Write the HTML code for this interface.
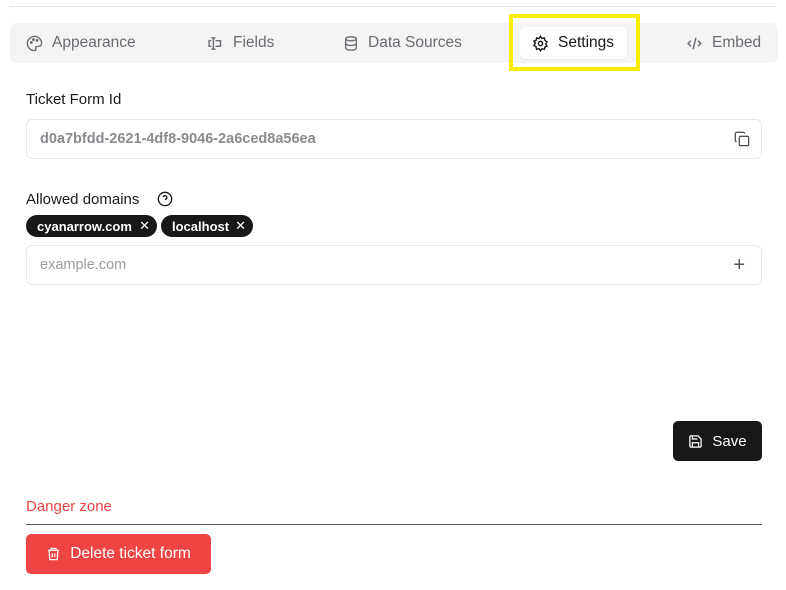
<!DOCTYPE html>
<html><head><style>
*{box-sizing:border-box;margin:0;padding:0}
body{width:786px;height:590px;background:#fff;font-family:"Liberation Sans",sans-serif;position:relative;overflow:hidden;color:#1a1a1a}
.a{position:absolute}
.tab{position:absolute;top:23px;height:40px;display:flex;align-items:center;font-size:15.5px;color:#6b6b72;gap:9px}
svg{display:block}
.input{position:absolute;left:26px;width:736px;height:40px;border:1px solid #e8e8ea;border-radius:6px;display:flex;align-items:center;padding-left:13px;font-size:14.5px}
.chip{position:absolute;top:215px;height:22px;background:#18181b;color:#fff;border-radius:11px;font-size:13px;font-weight:bold;display:flex;align-items:center;padding-left:11px}
</style></head><body>
<div class="a" style="left:10px;top:6px;width:766px;height:1px;background:#e5e5e5"></div>
<div class="a" style="left:10px;top:23px;width:768px;height:40px;background:#f4f4f5;border-radius:7px"></div>
<div class="tab" style="left:26px"><svg width="17" height="17" viewBox="0 0 24 24" fill="none" stroke="#6b6b72" stroke-width="2"><path d="M12 2a10 10 0 0 0 0 20c1.5 0 2-1 2-2s-1-2 0-3 2-1 4-1a4 4 0 0 0 4-4C22 6 17.5 2 12 2z"/><circle cx="7.5" cy="10.5" r="1"/><circle cx="10.5" cy="6.5" r="1"/><circle cx="15.5" cy="7.5" r="1"/></svg>Appearance</div>
<div class="tab" style="left:207px"><svg width="17" height="17" viewBox="0 0 24 24" fill="none" stroke="#6b6b72" stroke-width="2"><path d="M9 4v16M6 4h6M6 20h6M12 8h7v8h-7M6 8H3v8h3"/></svg>Fields</div>
<div class="tab" style="left:343px"><svg width="16" height="17" viewBox="0 0 24 24" fill="none" stroke="#6b6b72" stroke-width="2"><ellipse cx="12" cy="5" rx="8" ry="3"/><path d="M4 5v14c0 1.7 3.6 3 8 3s8-1.3 8-3V5M4 12c0 1.7 3.6 3 8 3s8-1.3 8-3"/></svg>Data Sources</div>
<div class="a" style="left:509px;top:14px;width:131px;height:57px;border:4px solid #f7ee00"></div>
<div class="a" style="left:520px;top:27px;width:107px;height:32px;background:#fff;border-radius:5px;box-shadow:0 1px 2px rgba(0,0,0,.06)"></div>
<div class="tab" style="left:532px;color:#18181b"><svg width="17" height="17" viewBox="0 0 24 24" fill="none" stroke="#18181b" stroke-width="2"><circle cx="12" cy="12" r="3"/><path d="M12 2l2 3 3.5-.8.8 3.5 3 2-2 3 2 3-3 1-.8 3.5-3.5-.8-2 3-2-3-3.5.8-.8-3.5-3-2 2-3-2-3 3-1 .8-3.5 3.5.8z"/></svg>Settings</div>
<div class="tab" style="left:686px"><svg width="17" height="17" viewBox="0 0 24 24" fill="none" stroke="#6b6b72" stroke-width="2"><path d="M7 8l-4 4 4 4M17 8l4 4-4 4M14 4l-4 16"/></svg>Embed</div>
<div class="a" style="left:26px;top:91px;font-size:15px">Ticket Form Id</div>
<div class="input" style="top:119px;color:#8a8a8f;font-weight:bold">d0a7bfdd-2621-4df8-9046-2a6ced8a56ea</div>
<svg class="a" style="left:734px;top:131px" width="16" height="16" viewBox="0 0 24 24" fill="none" stroke="#555" stroke-width="2"><rect x="8" y="8" width="14" height="14" rx="2"/><path d="M4 16c-1 0-2-1-2-2V4c0-1 1-2 2-2h10c1 0 2 1 2 2"/></svg>
<div class="a" style="left:26px;top:191px;font-size:15px">Allowed domains</div>
<svg class="a" style="left:157px;top:191px" width="16" height="16" viewBox="0 0 24 24" fill="none" stroke="#18181b" stroke-width="2"><circle cx="12" cy="12" r="10"/><path d="M9.1 9a3 3 0 0 1 5.8 1c0 2-3 3-3 3M12 17h.01"/></svg>
<div class="chip" style="left:26px;width:131px">cyanarrow.com<span style="position:absolute;right:7px;font-weight:normal">✕</span></div>
<div class="chip" style="left:161px;width:92px">localhost<span style="position:absolute;right:7px;font-weight:normal">✕</span></div>
<div class="input" style="top:245px;color:#9a9aa0">example.com<span style="position:absolute;right:16px;font-size:20px;color:#555">+</span></div>
<div class="a" style="left:673px;top:421px;width:89px;height:40px;background:#18181b;border-radius:5px;color:#fff;font-size:15px;display:flex;align-items:center;justify-content:center;gap:9px"><svg width="15" height="15" viewBox="0 0 24 24" fill="none" stroke="#fff" stroke-width="2"><path d="M5 3h11l5 5v11a2 2 0 0 1-2 2H5a2 2 0 0 1-2-2V5a2 2 0 0 1 2-2z"/><path d="M7 3v5h8M7 21v-7h10v7"/></svg>Save</div>
<div class="a" style="left:26px;top:498px;font-size:15px;color:#ef4444">Danger zone</div>
<div class="a" style="left:26px;top:524px;width:736px;height:1px;background:#555"></div>
<div class="a" style="left:26px;top:534px;width:185px;height:40px;background:#ef4444;border-radius:5px;color:#fff;font-size:15.5px;display:flex;align-items:center;justify-content:center;gap:9px"><svg width="15" height="16" viewBox="0 0 24 24" fill="none" stroke="#fff" stroke-width="2"><path d="M3 6h18M8 6V3h8v3M5 6l1 15h12l1-15M10 11v6M14 11v6"/></svg>Delete ticket form</div>
</body></html>
